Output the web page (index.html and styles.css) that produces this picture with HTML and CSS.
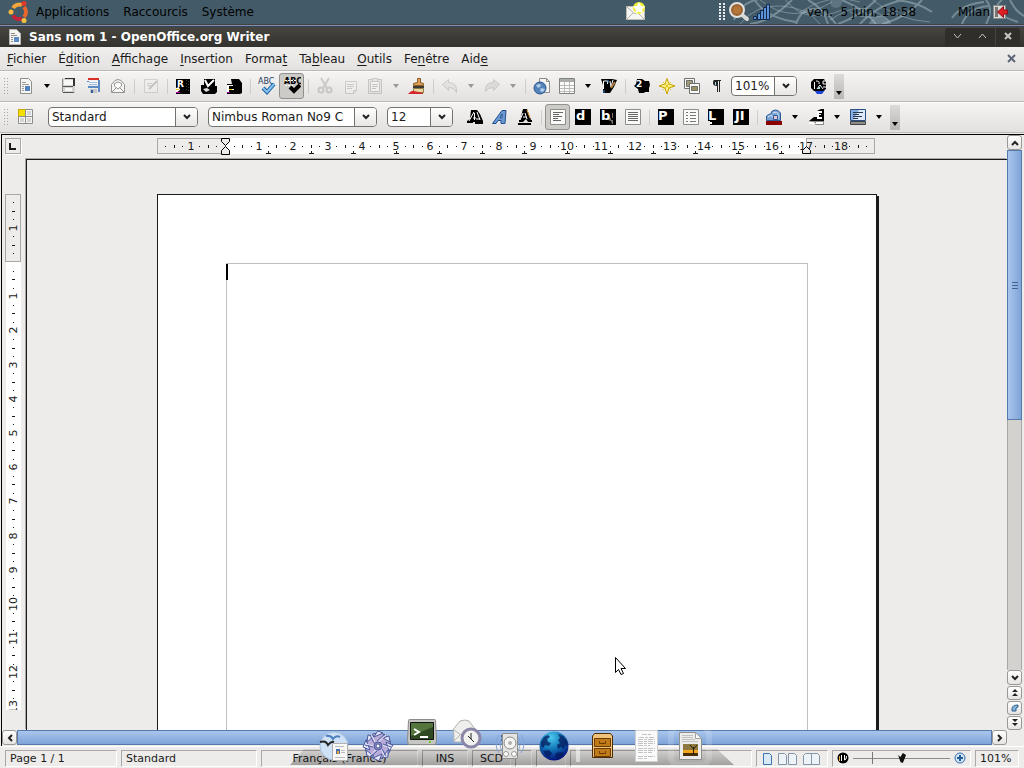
FILE: index.html
```html
<!DOCTYPE html>
<html lang="fr">
<head>
    <meta charset="UTF-8">
    <meta name="viewport" content="width=device-width, initial-scale=1.0">
    <title>Sans nom 1 - OpenOffice.org Writer</title>
    <link rel="stylesheet" href="styles.css">
</head>
<body>

<header class="panel">
    <svg class="panel-art" width="324" height="24" viewBox="0 0 324 24" fill="none" stroke="#9fb4be" stroke-opacity=".55">
        <path stroke-width="2" d="M34 20Q42 -2 70 -2M50 24Q70 22 92 0M52 -4Q64 18 96 22M96 24C102 6 120 2 136 24M108 0Q124 8 128 24"/>
        <path stroke-width="1" d="M40 24Q56 4 82 6T120 24M60 0Q92 26 132 2M84 -2Q104 26 142 10M100 12Q130 -8 160 2"/>
        <path stroke-width="2" d="M138 24Q160 16 176 0M142 0Q166 10 176 24M160 24Q178 4 204 0M182 24Q206 18 222 0M196 0Q218 2 232 12"/>
        <path stroke-width="1" d="M130 20Q164 -4 190 22M170 -2Q196 20 230 22M150 12Q170 24 200 10"/>
        <path stroke-width="2" d="M252 18Q262 4 284 2M262 24Q268 8 288 6M286 0Q294 10 286 24M302 0Q286 12 318 22M310 0Q316 12 324 16"/>
        <circle cx="180" cy="28" r="12" fill="#9fb4be" fill-opacity=".4" stroke="none"/>
        <circle cx="136" cy="2" r="6" fill="#9fb4be" fill-opacity=".3" stroke="none"/>
    </svg>
    <nav class="panel-menus">
        <svg width="24" height="24" viewBox="0 0 24 24" fill="none" stroke-width="4">
            <path stroke="#f2a53c" d="M6 8A7.500 7.500 0 0 1 15 5"/>
            <path stroke="#e8682c" d="M17 7A7.500 7.500 0 0 1 17 17"/>
            <path stroke="#c4243a" d="M15 18.500A7.500 7.500 0 0 1 6 15.500"/>
            <circle cx="4" cy="12" r="2.500" fill="#f7b73c"/>
            <circle cx="17" cy="3.500" r="2.500" fill="#e23b2c"/>
            <circle cx="17" cy="20.500" r="2.500" fill="#f7c23c"/>
        </svg>
        <button>Applications</button>
        <button>Raccourcis</button>
        <button>Système</button>
    </nav>
    <svg class="mail-tray" width="22" height="20" viewBox="0 0 22 20">
        <path fill="#f5f5f3" stroke="#bdbdb5" d="M1.500 4.500h18v13h-18z"/>
        <path fill="none" stroke="#b5b5ad" d="M2 5l8 7 8-7M2 17l6-6M19 17l-6-6"/>
        <circle cx="14" cy="6" r="6" fill="#f3ef3a"/>
        <path fill="#fff" d="M14 0l2 4 4 .500-3 3 1 4-4-2-4 2 1-4-3-3 4-.500z"/>
    </svg>
    <div class="tray">
        <svg width="6" height="18" viewBox="0 0 6 18" stroke="#e6ecef" stroke-width="2" stroke-dasharray="2 1"><path d="M1 0v18M5 0v18"/></svg>
        <svg width="22" height="22" viewBox="0 0 22 22">
            <path stroke="#d8d8d6" stroke-width="4" stroke-linecap="round" d="M13 13l6 5"/>
            <circle cx="9" cy="9" r="7" fill="#9a6434" stroke="#e2e2e0" stroke-width="2"/>
            <circle cx="9" cy="9" r="4" fill="#b5763a"/>
        </svg>
        <svg width="18" height="18" viewBox="0 0 18 18" fill="#5b93d8" stroke="#12274a">
            <path d="M.500 13.500h3v3h-3zM4.500 10.500h3v6h-3zM7.500 7.500h3v9h-3zM10.500 4.500h3v12h-3zM13.500 1.500h3v15h-3z"/>
        </svg>
    </div>
    <time class="clock">ven.&nbsp; 5 juin, 18:58</time>
    <button class="session">Milan
        <svg width="16" height="16" viewBox="0 0 16 16">
            <path fill="#d9d9d7" stroke="#8a8a88" d="M.500 1.500h12v13h-12z"/>
            <path fill="#767674" d="M2 3h3v10H2z"/>
            <path fill="#e01f26" stroke="#8f1115" d="M4.500 8l6-5.500V6h4v4h-4v3.500z"/>
        </svg>
    </button>
</header>

<div class="titlebar">
    <svg width="14" height="16" viewBox="0 0 14 16">
        <path fill="#f4f4f2" stroke="#b5b5b3" d="M1.500 .500h7l4 4v11h-11z"/>
        <path stroke="#8e8e8c" d="M3 4.500h4M3 6.500h6M3 8.500h2M3 10.500h2M3 12.500h2"/>
        <path fill="#5b8ac4" d="M6 8h5v5H6z"/>
    </svg>
    <h1>Sans nom 1 - OpenOffice.org Writer</h1>
    <div class="window-buttons">
        <button aria-label="Réduire"><svg width="9" height="6" viewBox="0 0 9 6"><path d="M1 1l3.500 4L8 1"/></svg></button>
        <button aria-label="Agrandir"><svg width="9" height="6" viewBox="0 0 9 6"><path d="M1 5l3.500-4L8 5"/></svg></button>
        <button aria-label="Fermer"><svg width="8" height="8" viewBox="0 0 8 8"><path stroke-width="2" d="M1 1l6 6M7 1L1 7"/></svg></button>
    </div>
</div>

<nav class="menubar">
    <button><u>F</u>ichier</button>
    <button>É<u>d</u>ition</button>
    <button><u>A</u>ffichage</button>
    <button><u>I</u>nsertion</button>
    <button>Forma<u>t</u></button>
    <button>Ta<u>b</u>leau</button>
    <button><u>O</u>utils</button>
    <button>Fe<u>n</u>être</button>
    <button>Aid<u>e</u></button>
    <button class="close-doc" aria-label="Fermer le document"><svg width="10" height="10" viewBox="0 0 10 10"><path stroke="#5c6678" stroke-width="2" d="M1 1l7 7M8 1L1 8"/></svg></button>
</nav>

<div class="toolbar">
    <span class="grip"></span>
    <button class="tool" aria-label="Nouveau"><svg width="18" height="18" viewBox="0 0 18 18">
        <path fill="#f6f6f4" stroke="#8c8f8a" d="M3.500 1.500h8l3 3v12h-11z"/>
        <path stroke="#9a9a98" d="M5 5.500h4M5 7.500h7M5 9.500h2M5 11.500h2M5 13.500h2"/>
        <path fill="#4f82bd" d="M8 9h5v5H8z"/></svg></button>
    <button class="drop" aria-label="Type de document"><svg width="6" height="4"><path d="M0 0h6L3 4z"/></svg></button>
    <button class="tool" aria-label="Ouvrir"><svg width="18" height="18" viewBox="0 0 18 18">
        <path fill="#d2d2d0" d="M3 1h13v15H3z"/>
        <path fill="#333" d="M6 1h10v1H6zM14 2h2v7h-2z"/><path fill="#555" d="M4 9h10v1H4zM4 15h11v1H4z"/>
        <path fill="#f7f7f5" d="M5 3h9v5H5zM6 11h7v3H6z"/><path stroke="#8a8a88" d="M3.500 2v13"/></svg></button>
    <button class="tool" aria-label="Enregistrer"><svg width="18" height="18" viewBox="0 0 18 18">
        <path fill="#d83024" d="M4 1h11v2H4z"/><path fill="#5b8ac4" d="M3 4h2v1H3zM14 3h2v12h-2zM4 9h10v2H4z"/>
        <path fill="#fafafa" d="M5 4h8v4H5z"/><path stroke="#9dbbe0" d="M5 5.500h8M5 7.500h8"/><path fill="#c4c6c8" d="M6 12h7v4H6z"/><path fill="#335f98" d="M7 13h2v3H7z"/></svg></button>
    <button class="tool" aria-label="Envoyer par courriel"><svg width="18" height="18" viewBox="0 0 18 18" fill="#f5f5f3" stroke="#939391">
        <path d="M2.500 7.500L6 3.500q3-2 6 0l3.500 4v8h-13z"/><path fill="#fff" d="M5.500 9V6.500q3.500-3 7 0V9L9 12z"/><path fill="none" d="M3 15l4-4M15 15l-4-4"/></svg></button>
    <span class="sep"></span>
    <button class="tool faded" aria-label="Éditer"><svg width="18" height="18" viewBox="0 0 18 18">
        <path fill="#f0f0ee" stroke="#9a9a98" d="M2.500 2.500h13v13h-13z"/><path stroke="#9a9a98" d="M5 6.500h5M5 8.500h4"/><path stroke="#777" stroke-width="2" d="M7 12l8-8"/></svg></button>
    <span class="sep"></span>
    <button class="tool" aria-label="Exporter en PDF"><svg width="18" height="18" viewBox="0 0 18 18">
        <path d="M1 2h14v15H1z"/><path stroke="#44423c" stroke-dasharray="1 2" d="M11.500 3v12M13.500 4v12"/><path fill="#fff" d="M1 11l3-1 1 3-4 3z"/><path fill="#f0d000" d="M1 12h3v1H1z"/><path fill="#c000b8" d="M1 15h4v1H1z"/><text class="glyph" x="2" y="10">R</text></svg></button>
    <button class="tool" aria-label="Imprimer"><svg width="18" height="18" viewBox="0 0 18 18">
        <path d="M4 2h11v7h2v6l-2 2H3l-2-3V8h3z"/><path fill="none" stroke="#fff" stroke-width="2" d="M5 3l3 6 6-6"/><path fill="#ddd" d="M3 12l4-1 3 2-4 2z"/></svg></button>
    <button class="tool" aria-label="Aperçu"><svg width="18" height="18" viewBox="0 0 18 18">
        <path d="M6 2h8l3 4v10l-2 1H2V7h5z"/><path fill="#fff" d="M2 8h6v1H4v3h5v1H4v3H2z"/><path fill="#e8d400" d="M4 12h3v1H4z"/><path fill="#9d00b0" d="M2 15h3v1H2z"/></svg></button>
    <span class="sep"></span>
    <button class="tool" aria-label="Orthographe"><svg width="18" height="18" viewBox="0 0 18 18">
        <text class="abc" x="0" y="7">ABC</text><path fill="none" stroke="#1b5e9f" stroke-width="4" d="M5 11l4 4 7-8"/><path fill="none" stroke="#83c3f2" stroke-width="2" d="M5 11l4 4 7-8"/></svg></button>
    <button class="tool pressed" aria-label="Vérification automatique"><svg width="18" height="18" viewBox="0 0 18 18">
        <text class="abc dark" x="1" y="7">ABC</text><path stroke="#fff" stroke-dasharray="2 1" d="M2 3.500h12M2 8.500h8"/><path fill="none" stroke="#000" stroke-width="4" d="M7 10l4 4 6-6"/></svg></button>
    <span class="sep"></span>
    <button class="tool faded" aria-label="Couper"><svg width="18" height="18" viewBox="0 0 18 18" fill="none" stroke="#8a8a88" stroke-width="2">
        <path d="M5 1l6 10M13 1L7 11"/><circle cx="5" cy="13" r="2.500"/><circle cx="13" cy="13" r="2.500"/></svg></button>
    <button class="tool faded" aria-label="Copier"><svg width="18" height="18" viewBox="0 0 18 18" fill="#f3f3f1" stroke="#8a8a88">
        <path d="M4.500 4.500h11v9l-3 3h-8zM12.500 16.500v-3h3"/><path d="M6 7.500h7M6 9.500h7M6 11.500h5"/></svg></button>
    <button class="tool faded" aria-label="Coller"><svg width="18" height="18" viewBox="0 0 18 18" fill="#dcdcda" stroke="#7d7d7b">
        <path d="M2.500 2.500h13v14h-13z"/><path fill="#fff" d="M4.500 4.500h9v10h-9z"/><path d="M6.500 1.500h5v3h-5z"/><path d="M6 7.500h6M6 9.500h6M6 11.500h4"/></svg></button>
    <button class="drop faded" aria-label="Options de collage"><svg width="6" height="4"><path d="M0 0h6L3 4z"/></svg></button>
    <button class="tool" aria-label="Appliquer le format"><svg width="18" height="18" viewBox="0 0 18 18">
        <path fill="#d9a05a" stroke="#8a5a20" d="M9.500 1.500h3v4l3 1v2h-10v-2l4-1z"/><path fill="#3d3a36" d="M5 9h11v2H5z"/><path fill="#e9d7a2" stroke="#8d7a42" d="M5.500 11.500h10v4h-10z"/><path fill="#d3262b" d="M0 17q4-4 6-3l9 2v1z"/></svg></button>
    <span class="sep"></span>
    <button class="tool faded" aria-label="Annuler"><svg width="18" height="18" viewBox="0 0 18 18" fill="#d2d2d0" stroke="#8a8a88"><path d="M1.500 7.500l6-5v3q9 0 8 10-2-5-8-5v3z"/></svg></button>
    <button class="drop faded" aria-label="Liste annuler"><svg width="6" height="4"><path d="M0 0h6L3 4z"/></svg></button>
    <button class="tool faded" aria-label="Restaurer"><svg width="18" height="18" viewBox="0 0 18 18" fill="#bdbdbb" stroke="#8a8a88"><path d="M16.500 7.500l-6-5v3q-9 0-8 9 2-4 8-4v3z"/></svg></button>
    <button class="drop faded" aria-label="Liste restaurer"><svg width="6" height="4"><path d="M0 0h6L3 4z"/></svg></button>
    <span class="sep"></span>
    <button class="tool" aria-label="Hyperlien"><svg width="18" height="18" viewBox="0 0 18 18">
        <path fill="#f4f4f2" stroke="#8a8d88" d="M6.500 1.500h7l3 3v11h-10z"/><path fill="none" stroke="#8a8d88" d="M13.500 1.500v3h3"/><circle cx="7" cy="11" r="6" fill="#5584bd" stroke="#2b5288"/><path fill="#b7cfe9" d="M3 8l4-1 1 2-3 2zM8 11l4 1-2 3-3-1z"/></svg></button>
    <button class="tool" aria-label="Tableau"><svg width="18" height="18" viewBox="0 0 18 18">
        <path fill="#fbfbf9" stroke="#7f827d" d="M1.500 1.500h15v15h-15z"/><path fill="#a9aca7" d="M2 2h14v3H2z"/><path fill="none" stroke="#b9bbb6" d="M2 8.500h14M2 11.500h14M2 14.500h14M6.500 5v11M11.500 5v11"/></svg></button>
    <button class="drop" aria-label="Taille du tableau"><svg width="6" height="4"><path d="M0 0h6L3 4z"/></svg></button>
    <button class="tool" aria-label="Fonctions de dessin"><svg width="18" height="18" viewBox="0 0 18 18">
        <path d="M1 2h11l5 1-3 7-4 6H3V8z"/><path fill="none" stroke="#fff" d="M3.500 12V4h4v3M10 4l1 6M13 3l-2 7"/><path stroke="#3a8ad8" d="M4 13v3M8 3v3"/><path stroke="#a87838" stroke-width="2" d="M11 11l4-6"/></svg></button>
    <span class="sep"></span>
    <button class="tool" aria-label="Rechercher"><svg width="18" height="18" viewBox="0 0 18 18">
        <path d="M4 2h5l3 2h4l1 4-1 3v4h-4l-1 1H6l-1-4-4-3 2-2z"/><text class="glyph" x="3" y="10">2</text></svg></button>
    <button class="tool" aria-label="Navigateur"><svg width="18" height="18" viewBox="0 0 18 18" fill="#fbf08a" stroke="#c9a400"><path d="M9 1.500l2 5.500 6 2-6 2-2 6-2-6-6-2 6-2z"/><path fill="none" stroke="#e2c318" d="M5 5l8 8M13 5l-8 8"/></svg></button>
    <button class="tool" aria-label="Galerie"><svg width="18" height="18" viewBox="0 0 18 18" fill="#f8f8f6" stroke="#6d706b">
        <path d="M1.500 1.500h10v10h-10z"/><path fill="#a39a7a" d="M3.500 3.500h6v6h-6z"/><path d="M6.500 6.500h10v10h-10z"/><path fill="#9c8f60" d="M8.500 9.500h6v4h-6z"/></svg></button>
    <button class="tool" aria-label="Caractères non imprimables"><svg width="18" height="18" viewBox="0 0 18 18"><path fill="#222" d="M6 3h7v1h-1v11h-1V4h-1v11H9V9q-4 0-4-3t1-3z"/><path fill="#9ed6e8" d="M7 5h1v3H7z"/></svg></button>
    <label class="combo zoom-combo"><select aria-label="Zoom"><option>101%</option></select><span class="combo-arrow"><svg width="8" height="6" viewBox="0 0 8 6"><path d="M1 1l3 3 3-3"/></svg></span></label>
    <button class="tool" aria-label="Aide"><svg width="18" height="18" viewBox="0 0 18 18">
        <path fill="#1c42d8" d="M4 13h11l-3 4H7z"/><path d="M4 2h10l2 3v7l-3 2H4l-3-3V5z"/><path fill="none" stroke="#fff" d="M4.500 12V5M6 4q4 0 3 3M7 12l3-4 3 4M16 4h-3v3h3M13 10h4"/><path fill="#9ed6e8" d="M8 10h2v2H8z"/></svg></button>
    <button class="overflow" aria-label="Plus"><svg width="6" height="4"><path d="M0 0h6L3 4z"/></svg></button>
</div>

<div class="toolbar">
    <span class="grip"></span>
    <button class="tool" aria-label="Styles et formatage"><svg width="18" height="18" viewBox="0 0 18 18" stroke="#8b8e89">
        <path fill="#f7f7f5" d="M1.500 1.500h14v14h-14z"/><path fill="#f4e000" stroke="#c9a900" d="M1.500 1.500h7v7h-7z"/><path fill="#d5d5d3" stroke="none" d="M10 3h4v4h-4zM3 10h4v4H3zM10 10h4v4h-4z"/><path d="M8.500 2v13M2 8.500h13"/></svg></button>
    <label class="combo style-combo"><select aria-label="Style"><option>Standard</option></select><span class="combo-arrow"><svg width="8" height="6" viewBox="0 0 8 6"><path d="M1 1l3 3 3-3"/></svg></span></label>
    <label class="combo font-combo"><select aria-label="Police"><option>Nimbus Roman No9 C</option></select><span class="combo-arrow"><svg width="8" height="6" viewBox="0 0 8 6"><path d="M1 1l3 3 3-3"/></svg></span></label>
    <label class="combo size-combo"><select aria-label="Taille"><option>12</option></select><span class="combo-arrow"><svg width="8" height="6" viewBox="0 0 8 6"><path d="M1 1l3 3 3-3"/></svg></span></label>
    <button class="tool" aria-label="Gras"><svg width="18" height="18" viewBox="0 0 18 18"><path d="M5 2h6l3 4 3 7v3H9v-2H7v1H1v-2l3-2z"/><path fill="none" stroke="#fff" d="M3 13l5-9M8.500 5v7M7 10h3M11 4l3 8M10 11h4"/></svg></button>
    <button class="tool" aria-label="Italique"><svg width="18" height="18" viewBox="0 0 18 18"><path fill="#6d9bd1" stroke="#20508f" fill-rule="evenodd" d="M1.500 15.500L11 2.500h4l-1 13h-4v-3H7l-2 3zM9 10h2V6z"/></svg></button>
    <button class="tool" aria-label="Souligné"><svg width="18" height="18" viewBox="0 0 18 18"><path d="M7 1h4l4 11h1v2h-4l-2-3-3 3H3v-2h1zM2 15h13v2H2z"/><path fill="none" stroke="#fff" d="M4 12l3-7M9 5l2 6M7 9h3"/><path stroke="#e8a53a" d="M11 2l3 8"/></svg></button>
    <span class="sep"></span>
    <button class="tool pressed" aria-label="Aligner à gauche"><svg width="18" height="18" viewBox="0 0 18 18"><path fill="#fafaf8" stroke="#8b8e89" d="M1.500 1.500h15v15h-15z"/><path stroke="#666" d="M4 4.500h10M4 6.500h6M4 8.500h9M4 10.500h5M4 12.500h8"/></svg></button>
    <button class="tool" aria-label="Centrer"><svg width="18" height="18" viewBox="0 0 18 18"><path d="M1 1h16v16H1z"/><text class="glyph big" x="2" y="12">d</text></svg></button>
    <button class="tool" aria-label="Aligner à droite"><svg width="18" height="18" viewBox="0 0 18 18"><path d="M1 1h16v16H1z"/><path fill="#77736c" d="M9 10h3v2h2v4h-1l-1-3-3-1zM13 5h1v5h-1z"/><text class="glyph big" x="2" y="12">b</text></svg></button>
    <button class="tool" aria-label="Justifier"><svg width="18" height="18" viewBox="0 0 18 18"><path fill="#fafaf8" stroke="#8b8e89" d="M1.500 1.500h15v15h-15z"/><path stroke="#666" d="M4 4.500h10M4 6.500h10M4 8.500h10M4 10.500h10M4 12.500h10"/></svg></button>
    <span class="sep"></span>
    <button class="tool" aria-label="Numérotation"><svg width="18" height="18" viewBox="0 0 18 18"><path d="M1 1h16v16H1z"/><text class="glyph big" x="1" y="12">P</text></svg></button>
    <button class="tool" aria-label="Puces"><svg width="18" height="18" viewBox="0 0 18 18"><path fill="#fafaf8" stroke="#8b8e89" d="M1.500 1.500h15v15h-15z"/><path stroke="#777" d="M4 4.500h2M8 4.500h6M4 7.500h2M8 7.500h6M4 10.500h2M8 10.500h6M4 13.500h2M8 13.500h6"/></svg></button>
    <button class="tool" aria-label="Diminuer le retrait"><svg width="18" height="18" viewBox="0 0 18 18"><path d="M1 1h16v16H3v-4H1z"/><path fill="#fff" d="M3 14h2v2H3z"/><text class="glyph big" x="1" y="12">L</text></svg></button>
    <button class="tool" aria-label="Augmenter le retrait"><svg width="18" height="18" viewBox="0 0 18 18"><path d="M1 1h16v16H1z"/><text class="glyph big" x="3" y="12">JI</text></svg></button>
    <span class="sep"></span>
    <button class="tool" aria-label="Couleur de caractère"><svg width="18" height="18" viewBox="0 0 18 18"><path fill="#7aa2d4" stroke="#2f5c98" d="M1.500 12.500V8q2-2 4-2 1-4 5-4 3 0 5 3v7.500z"/><path fill="none" stroke="#dbe8f6" d="M3 9q3-3 5 0M8 5q4-2 5 1v5"/><path fill="#e8c4cc" stroke="#2f5c98" d="M8.500 7.500h4v4h-4z"/><path fill="#8c0000" d="M1 13h16v4H1z"/></svg></button>
    <button class="drop" aria-label="Choisir la couleur"><svg width="6" height="4"><path d="M0 0h6L3 4z"/></svg></button>
    <button class="tool" aria-label="Surlignage"><svg width="18" height="18" viewBox="0 0 18 18"><path d="M14 1h3v12H2l5-4h3V3z"/><path fill="#fff" d="M10 3h5v2h-3v1h2v1h-2v2h3v2h-5z"/><path fill="#8a8a88" d="M1 13h16v4H8l1-2z"/><path fill="#fff" d="M2 14h5v2H2zM9 14h7v2H9z"/></svg></button>
    <button class="drop" aria-label="Choisir le surlignage"><svg width="6" height="4"><path d="M0 0h6L3 4z"/></svg></button>
    <button class="tool" aria-label="Arrière-plan"><svg width="18" height="18" viewBox="0 0 18 18"><path fill="#86aee0" stroke="#2c4f83" d="M1.500 1.500h15v11h-15z"/><path fill="#dde9f6" d="M10 2h6v10H4z"/><path stroke="#26364e" d="M4 4.500h10M4 6.500h6M4 8.500h9M4 10.500h5"/><path fill="#8b8e89" stroke="#444" d="M1.500 13.500h15v3h-15z"/></svg></button>
    <button class="drop" aria-label="Choisir l'arrière-plan"><svg width="6" height="4"><path d="M0 0h6L3 4z"/></svg></button>
    <button class="overflow" aria-label="Plus"><svg width="6" height="4"><path d="M0 0h6L3 4z"/></svg></button>
</div>

<main class="workspace">
    <div class="corner"><button aria-label="Tabulation"><svg width="8" height="8"><path d="M1 1v6h6" fill="none" stroke="#1a1a1a" stroke-width="2"/></svg></button></div>
    <div class="ruler-row"><svg class="ruler-h" width="719" height="17"></svg></div>
    <div class="ruler-col"><svg class="ruler-v" width="16" height="100%"></svg></div>
    <div class="canvas">
        <div class="page">
            <div class="text-frame" contenteditable="true" role="textbox" aria-label="Document"><span class="caret"></span></div>
        </div>
    </div>
    <div class="scroll-v">
        <button aria-label="Haut"><svg width="8" height="6" viewBox="0 0 8 6"><path d="M1 5l3-3 3 3"/></svg></button>
        <div class="track"><span class="thumb"><i></i></span></div>
        <button aria-label="Bas"><svg width="8" height="6" viewBox="0 0 8 6"><path d="M1 1l3 3 3-3"/></svg></button>
        <button class="small" aria-label="Page précédente"><svg width="8" height="8" viewBox="0 0 8 8"><path class="solid" d="M4 0l3 3H1zM4 4l3 3H1z"/></svg></button>
        <button class="small" aria-label="Navigation"><svg width="8" height="8" viewBox="0 0 8 8"><path class="nav-mark" d="M1 7V5q0-4 6-4v2L5 4v3z"/></svg></button>
        <button class="small" aria-label="Page suivante"><svg width="8" height="8" viewBox="0 0 8 8"><path class="solid" d="M1 0h6L4 3zM1 4h6L4 7z"/></svg></button>
    </div>
    <div class="scroll-h">
        <button aria-label="Gauche"><svg width="6" height="8" viewBox="0 0 6 8"><path d="M5 1L2 4l3 3"/></svg></button>
        <span class="thumb"><i></i></span>
        <button aria-label="Droite"><svg width="6" height="8" viewBox="0 0 6 8"><path d="M1 1l3 3-3 3"/></svg></button>
    </div>
</main>

<footer class="statusbar">
    <span class="field f-page">Page 1 / 1</span>
    <span class="field f-style">Standard</span>
    <span class="field f-lang">Français (France)</span>
    <span class="field f-ins">INS</span>
    <span class="field f-scd">SCD</span>
    <span class="field f-mod"></span>
    <span class="field f-sig"></span>
    <span class="field f-info"></span>
    <span class="field f-views">
        <svg width="10" height="12" viewBox="0 0 10 12"><path fill="#dbe9f7" stroke="#3b76b4" d="M.500 .500h6l2 2v9h-8z"/></svg>
        <svg width="20" height="12" viewBox="0 0 20 12" fill="#eef3f8" stroke="#8496a8"><path d="M.500 .500h6l2 2v9h-8zM10.500 .500h6l2 2v9h-8z"/></svg>
        <svg width="18" height="12" viewBox="0 0 18 12" fill="#eef3f8" stroke="#8496a8"><path d="M.500 2.500l2-2h6v11h-8zM8.500 .500h6l2 2v9h-8z"/></svg>
    </span>
    <span class="field f-slider">
        <svg width="12" height="12" viewBox="0 0 12 12"><circle cx="6" cy="6" r="5.500"/><path fill="none" stroke="#fff" d="M4.500 3v6M7.500 3v5q2 0 2-4"/><path stroke="#e8a53a" d="M2.500 4v5"/></svg>
        <input type="range" min="20" max="180" value="101" aria-label="Facteur de zoom">
        <svg width="12" height="12" viewBox="0 0 12 12"><circle cx="6" cy="6" r="5" fill="#d5e7f7" stroke="#2f6ca8"/><path stroke="#1f5a98" stroke-width="2" d="M3 6h6M6 3v6"/></svg>
    </span>
    <span class="field f-zoom">101%</span>
</footer>

<nav class="dock" aria-label="Dock">
    <div class="shelf"></div>
    <button aria-label="Writer"><svg width="32" height="32" viewBox="0 0 32 32">
        <circle cx="16" cy="16" r="14" fill="#cfe1f4" stroke="#a5c1e2"/><path fill="none" stroke="#4a7fc0" stroke-width="2" d="M8 6q5-1 7 3 3-4 7-2"/><path fill="none" stroke="#222" stroke-width="2" d="M2 12q6-2 8 3 3-4 6-3"/>
        <path fill="#f8f8f6" stroke="#b0b0ae" d="M14.500 13.500h15v17h-15z"/><path fill="#4a6ea8" d="M18 19h4v5h-4z"/><path fill="#e0a040" d="M19 21h2v3h-2z"/><path stroke="#bbb" d="M17 16.500h9M23 20.500h4M23 22.500h4M17 27.500h10"/></svg></button>
    <button aria-label="Photos"><svg width="32" height="32" viewBox="0 0 32 32" stroke="#4a5a9a" stroke-width="1">
        <circle cx="16" cy="16" r="13" fill="#b9acd8"/><path fill="#e6e6fa" d="M16 1l5 2-9 4 3-5zM31 15l-4 6-3-9 6 3zM17 31l-6-3 9-4zM1 17l3-7 4 10zM6 5l6 1-7 6zM27 6l1 6-7-4zM26 27l-6 1 6-8zM5 26l-1-6 8 6z"/>
        <path fill="none" stroke="#e9e9fb" stroke-width="1" d="M16 12l8-7M20 15l9 3M19 19l4 8M14 20l-7 6M12 16l-9-2M13 12L9 4"/><path fill="none" d="M15 11l8-7M21 14l8 3M20 19l4 7M15 21l-7 6M11 17l-8-2M12 13L8 5"/><circle cx="16" cy="16" r="4" fill="#8f86c4"/><circle cx="16" cy="16" r="2" fill="#fff"/></svg></button>
    <button class="raised" aria-label="Terminal"><svg width="32" height="32" viewBox="0 0 32 32">
        <path fill="#c5c5c1" stroke="#8b8b87" d="M2.500 3.500q0-1 1-1h25q1 0 1 1l1 20q0 4-2 4h-25q-2 0-2-4z"/><path fill="#2f4a22" stroke="#111" d="M4.500 5.500h23v17h-23z"/><path fill="#55753f" d="M5 6h22v4L5 19z"/><path fill="none" stroke="#fff" stroke-width="2" d="M8 12l5 3-5 3M14 20h8"/><path fill="#6fd030" d="M23 24h2v2h-2z"/></svg></button>
    <button class="raised" aria-label="Courriel et agenda"><svg width="32" height="32" viewBox="0 0 32 32">
        <path fill="#efefed" stroke="#b0b0ae" d="M3.500 12L10 4q5-2 9 0l6 8v13h-21z"/><path fill="none" stroke="#b5b5b3" d="M4 13l10 7 10-7M4 24l7-7"/><circle cx="21" cy="21" r="9" fill="#f1f1ef" stroke="#8c86a8" stroke-width="3"/><path fill="none" stroke="#222" d="M21 16v6l3 3M18 19l3 3"/></svg></button>
    <button aria-label="Musique"><svg width="32" height="32" viewBox="0 0 32 32">
        <path fill="none" stroke="#7fa4d8" stroke-width="1" d="M5 5Q-1 14 5 23M27 5q6 9 0 18M8 7q-4 7 0 14M24 7q4 7 0 14"/><path fill="#e4e4e2" stroke="#8f8f8d" d="M8.500 3.500h15v25h-15z"/><circle cx="16" cy="13" r="6" fill="#f5f5f3" stroke="#8b8b89"/><circle cx="16" cy="13" r="2" fill="#b0b0ae"/><circle cx="12" cy="24" r="2.500" fill="#fff" stroke="#999"/><circle cx="20" cy="24" r="2.500" fill="#fff" stroke="#999"/></svg></button>
    <button aria-label="Navigateur web"><svg width="32" height="32" viewBox="0 0 32 32">
        <defs><radialGradient id="globe" cx=".4" cy=".2" r=".8"><stop offset="0" stop-color="#4cc9ee"/><stop offset=".5" stop-color="#1278b8"/><stop offset="1" stop-color="#04107a"/></radialGradient></defs>
        <circle cx="16" cy="16" r="14.500" fill="url(#globe)"/><path fill="#051a5c" fill-opacity=".75" d="M3 12l3-5 4-2 2 2-3 2 1 3 3 1-2 3-4-1-2 3-2-2zM20 4l5 2 4 5 1 5-3-1-1 4-3-2-3 2-1-4 3-2-2-3 2-2zM5 21l6-1 3 3-2 4-4-1zM18 23l6-1 2 2-5 5-4-2z"/></svg></button>
    <span class="dock-gap"></span>
    <button aria-label="Fichiers"><svg width="32" height="32" viewBox="0 0 32 32">
        <path fill="#f0c27a" stroke="#4c2d06" d="M6.500 6l2-2.500h16l2 2.500v21.500h-20z"/><path fill="#c07a18" stroke="#6a3c04" d="M8.500 8.500h16v8h-16zM8.500 18.500h16v8h-16z"/><path fill="none" stroke="#6a3c04" d="M13.500 11v2.500h6V11M13.500 21v2.500h6V21"/></svg></button>
    <button aria-label="Document texte"><svg width="32" height="32" viewBox="0 0 32 32">
        <path fill="#fafafa" stroke="#cfcfcf" d="M5.500 .500h22v31h-22z"/><path stroke="#c3c3c3" stroke-dasharray="5 1 3 1" d="M12 4.500h9M9 7.500h15M8 9.500h17M8 11.500h17M8 13.500h17M8 15.500h12M8 18.500h17M8 20.500h17M8 22.500h14M8 26.500h17M8 28.500h10"/></svg></button>
    <button class="active" aria-label="Image"><svg width="32" height="32" viewBox="0 0 32 32">
        <path fill="#ececea" stroke="#8f8f8d" d="M5.500 2.500h16l6 6v21h-22z"/><path fill="#fff" stroke="#a0a09e" d="M21.500 2.500v6h6z"/><path stroke="#c0c0be" d="M8 5.500h11M8 7.500h11M8 9.500h13M8 11.500h16"/><path fill="#8d7a40" d="M9 14h15v12H9z"/><path fill="#f3a51c" d="M9 20h15v3H9z"/><path fill="#4a3008" d="M9 23h15v3H9z"/><path fill="none" stroke="#2b1c08" d="M19.500 25v-8M16 15l3.500 4 3.500-4"/></svg></button>
</nav>

<svg class="pointer" width="14" height="20" viewBox="0 0 14 20"><path fill="#fff" stroke="#000" d="M1.500 1.500v15l3-3 2.500 5 2.500-1-2.500-5h4.500z"/></svg>

<script src="script.js"></script>
</body>
</html>
```
FILE: styles.css
```css
* {
    box-sizing: border-box;
}

body {
    margin: 0;
    height: 100vh;
    display: flex;
    flex-direction: column;
    overflow: hidden;
    position: relative;
    background: #edecea;
    color: #1a1a1a;
    font-family: "DejaVu Sans", sans-serif;
    font-size: 12px;
}

button {
    font: inherit;
    color: inherit;
    border: 0;
    padding: 0;
    background: none;
}

svg {
    display: block;
    flex-shrink: 0;
}

/* desktop panel */
.panel {
    height: 26px;
    flex-shrink: 0;
    display: flex;
    align-items: center;
    position: relative;
    background: #435b68;
    border-bottom: 1px solid #7f8fae;
    box-shadow: inset 0 -1px 0 #45413f;
    color: #000;
    padding: 0 15px 2px 7px;
}

.panel-art {
    position: absolute;
    right: 0;
    top: 0;
}

.panel-menus {
    display: flex;
    align-items: center;
    flex: 1;
}

.panel-menus button {
    padding: 0 7px;
}

.panel-menus svg {
    margin-right: -2px;
}

.mail-tray {
    margin-right: 72px;
}

.tray {
    display: flex;
    align-items: center;
    gap: 3px;
    position: relative;
}

.clock {
    position: relative;
    margin: 0 42px 0 36px;
}

.session {
    display: flex;
    align-items: center;
    gap: 3px;
    position: relative;
}

/* window */
.titlebar {
    height: 21px;
    flex-shrink: 0;
    display: flex;
    align-items: center;
    gap: 7px;
    padding: 0 4px 0 8px;
    background: linear-gradient(#464540, #33322e);
    border-top: 1px solid #35435f;
}

.titlebar h1 {
    margin: 0;
    flex: 1;
    font-size: 12px;
    color: #fff;
}

.window-buttons {
    display: flex;
    background: #2f2e2b;
    border-radius: 3px;
}

.window-buttons button {
    width: 25px;
    height: 18px;
    display: grid;
    place-items: center;
    padding-bottom: 2px;
}

.window-buttons button:last-child {
    border-left: 1px solid #45443f;
}

.window-buttons path {
    fill: none;
    stroke: #c9c7c2;
}

.menubar {
    height: 24px;
    flex-shrink: 0;
    display: flex;
    align-items: center;
    padding: 0 3px 0 1px;
    background: linear-gradient(#f0efee, #e4e2e1);
    border-bottom: 1px solid #bcbab8;
}

.menubar button {
    padding: 0 6px;
}

.menubar u {
    text-underline-offset: 2px;
}

.menubar .close-doc {
    margin-left: auto;
    padding-right: 4px;
}

.toolbar {
    height: 31px;
    flex-shrink: 0;
    display: flex;
    align-items: center;
    padding-bottom: 1px;
    background: linear-gradient(#f5f4f3, #e3e1e0);
    border-bottom: 1px solid #bcbab8;
    border-top: 1px solid #fafafa;
}

.grip {
    width: 5px;
    height: 18px;
    margin: 0 5px 0 3px;
    background: radial-gradient(circle, #a8a6a4 1px, transparent 1px);
    background-size: 3px 3px;
}

.tool {
    width: 25px;
    height: 26px;
    display: grid;
    place-items: center;
    flex-shrink: 0;
}

.tool.pressed {
    background: #cdcbc8;
    border: 1px solid #93918e;
    border-radius: 3px;
}

.faded {
    opacity: 0.35;
}

.drop {
    width: 17px;
    height: 26px;
    display: grid;
    place-items: center;
    flex-shrink: 0;
}

.sep {
    width: 8px;
    height: 15px;
    flex-shrink: 0;
    background: linear-gradient(#cfcdcb, #cfcdcb) center / 1px 100% no-repeat;
}

.overflow {
    width: 10px;
    height: 25px;
    margin-left: 3px;
    display: grid;
    place-items: end center;
    padding-bottom: 4px;
    background: linear-gradient(#dddbd9, #b9b7b5);
}

.glyph {
    font-size: 9px;
    font-weight: bold;
    fill: #fff;
}

.glyph.big {
    font-size: 13px;
}

.abc {
    font-size: 8px;
    fill: #1c4060;
}

.abc.dark {
    font-weight: bold;
    fill: #000;
}

.combo {
    display: grid;
    grid-template-columns: 1fr 22px;
    height: 20px;
    background: #fff;
    border: 1px solid #74726f;
    border-radius: 4px;
    overflow: hidden;
}

.combo select {
    grid-area: 1 / 1 / 2 / 3;
    appearance: none;
    min-width: 0;
    border: 0;
    background: none;
    padding: 0 3px;
    font: inherit;
    color: inherit;
}

.combo-arrow {
    grid-area: 1 / 2 / 2 / 3;
    display: grid;
    place-items: center;
    background: linear-gradient(#fff, #e8e6e4);
    border-left: 1px solid #74726f;
    pointer-events: none;
}

.combo-arrow path,
.scroll-v path,
.scroll-h path {
    fill: none;
    stroke: #222;
    stroke-width: 2;
}

.style-combo {
    width: 150px;
    margin-left: 10px;
}

.font-combo {
    width: 169px;
    margin-left: 10px;
}

.size-combo {
    width: 66px;
    margin: 0 9px 0 10px;
}

.zoom-combo {
    width: 66px;
    margin: 0 9px 0 2px;
}

/* document area */
.workspace {
    flex: 1;
    min-height: 0;
    display: grid;
    grid-template-columns: 24px 1fr 17px;
    grid-template-rows: 24px 1fr 16px;
    margin: 1px 0 0 1px;
    border-left: 1px solid #000;
    border-top: 1px solid #000;
}

.corner {
    padding: 3px;
}

.corner button {
    width: 16px;
    height: 16px;
    display: grid;
    place-items: center;
    border: 1px solid #aaa8a6;
    box-shadow: 1px 1px 0 #fff;
}

.ruler-row {
    display: flex;
    justify-content: center;
    padding-top: 3px;
    min-width: 0;
}

.ruler-col {
    padding: 35px 3px 20px;
    min-height: 0;
}

.ruler-label {
    font-size: 11px;
    text-anchor: middle;
    fill: #1a1a1a;
}

.canvas {
    display: flex;
    justify-content: center;
    padding-top: 34px;
    overflow: hidden;
    min-height: 0;
    border-left: 1px solid #1a1a1a;
    border-top: 1px solid #1a1a1a;
    box-shadow: -1px -1px 0 #aaa8a6;
}

.page {
    width: 720px;
    min-height: 1018px;
    flex-shrink: 0;
    display: flex;
    padding: 68px;
    background: #fff;
    border: 1px solid #1a1a1a;
    box-shadow: 2px 2px 0 #1a1a1a;
}

.text-frame {
    flex: 1;
    border: 1px solid #c0c0c0;
    outline: none;
}

.caret {
    display: block;
    width: 2px;
    height: 16px;
    margin-left: -1px;
    background: #000;
}

.scroll-v {
    grid-area: 1 / 3 / 4 / 4;
    display: flex;
    flex-direction: column;
    gap: 1px;
    padding-bottom: 16px;
    padding-right: 2px;
}

.scroll-v button,
.scroll-h button {
    width: 15px;
    height: 15px;
    flex-shrink: 0;
    display: grid;
    place-items: center;
    border: 1px solid #9a9896;
    border-radius: 3px;
    background: linear-gradient(#fff, #e6e4e2);
}

.scroll-v .small {
    height: 14px;
}

.scroll-v .solid {
    fill: #222;
    stroke: none;
}

.scroll-v .nav-mark {
    fill: #86b4d8;
    stroke: #2c5f8f;
    stroke-width: 1;
}

.track {
    flex: 1;
    margin: -1px 0;
    background: #d3d2cf;
    border: solid #aaa8a6;
    border-width: 0 1px;
}

.thumb {
    display: grid;
    place-items: center;
    border: 1px solid #5679ab;
}

.track .thumb {
    height: 52%;
    margin: 0 -1px;
    background: linear-gradient(to right, #a9c5ec, #7fa4d8);
}

.thumb i {
    width: 6px;
    height: 7px;
    background: repeating-linear-gradient(#44638f 0 1px, transparent 1px 3px);
}

.scroll-h {
    grid-column: 1 / 3;
    display: flex;
}

.scroll-h .thumb {
    flex: 1;
    height: 15px;
    background: linear-gradient(#a9c5ec, #7fa4d8);
}

.scroll-h .thumb i {
    width: 7px;
    height: 6px;
    background: repeating-linear-gradient(to right, #44638f 0 1px, transparent 1px 3px);
}

/* status bar */
.statusbar {
    height: 22px;
    flex-shrink: 0;
    display: flex;
    gap: 4px;
    padding: 3px 5px 1px;
    border-top: 1px solid #fff;
    font-size: 11px;
}

.field {
    display: flex;
    align-items: center;
    padding: 0 4px 1px;
    border: 1px solid;
    border-color: #aaa8a6 #fff #fff #aaa8a6;
    white-space: nowrap;
}

.f-page {
    width: 112px;
}

.f-style {
    width: 136px;
}

.f-lang {
    width: 157px;
    justify-content: center;
}

.f-ins {
    width: 46px;
    justify-content: center;
}

.f-scd {
    width: 39px;
    justify-content: center;
}

.f-mod {
    width: 17px;
}

.f-sig {
    width: 30px;
}

.f-info {
    flex: 1;
}

.f-views {
    width: 72px;
    padding: 0 6px;
    justify-content: space-between;
}

.f-slider {
    width: 139px;
    gap: 4px;
}

.f-slider input {
    appearance: none;
    flex: 1;
    min-width: 0;
    height: 12px;
    margin: 0;
    background:
        linear-gradient(#777, #777) 20% center / 1px 12px no-repeat,
        linear-gradient(#8a8a8a, #8a8a8a) center / 100% 1px no-repeat;
}

.f-slider input::-webkit-slider-thumb {
    appearance: none;
    width: 8px;
    height: 10px;
    background: #111;
    clip-path: polygon(0 20%, 30% 40%, 60% 0, 100% 20%, 60% 100%, 30% 90%);
}

.f-zoom {
    width: 44px;
}

/* dock lies over the bottom of the window */
.dock {
    position: absolute;
    left: 50%;
    bottom: 0;
    transform: translateX(-50%);
    display: flex;
    align-items: flex-end;
    gap: 12px;
    padding: 0 28px 6px;
}

.dock button {
    position: relative;
    border-radius: 5px;
}

.dock .raised {
    margin-bottom: 13px;
}

.dock .active {
    box-shadow: 0 0 0 6px rgba(255, 255, 255, 0.15);
}

.dock-gap {
    width: 4px;
    height: 16px;
    margin: 0 -6px;
    position: relative;
    background: rgba(255, 255, 255, 0.5);
}

.shelf {
    position: absolute;
    left: 0;
    right: 0;
    bottom: 3px;
    height: 16px;
    background: linear-gradient(rgba(0, 0, 0, 0.1), rgba(0, 0, 0, 0.32));
    clip-path: polygon(0 100%, 14px 0, 427px 0, 100% 100%);
}

.pointer {
    position: absolute;
    left: 614px;
    top: 656px;
}
```
FILE: script.js
```javascript
const NS = 'http://www.w3.org/2000/svg';
const CM = 34.2;
const MARGIN = 68;

function add(svg, name, attrs, text) {
    const node = document.createElementNS(NS, name);
    for (const key in attrs) {
        node.setAttribute(key, attrs[key]);
    }
    if (text !== undefined) node.textContent = text;
    svg.appendChild(node);
}

function drawHorizontal(svg) {
    add(svg, 'rect', { x: MARGIN, y: 0, width: 581, height: 16, fill: '#fff' });
    add(svg, 'rect', { x: 0.5, y: 0.5, width: MARGIN, height: 15, fill: 'none', stroke: '#aaa8a6' });
    add(svg, 'rect', { x: 649.5, y: 0.5, width: 68, height: 15, fill: '#edecea', stroke: '#aaa8a6' });

    for (let i = -7; i < 76; i++) {
        const x = Math.round(MARGIN + i * CM / 4);
        if (i % 4 === 0) {
            if (i !== 0) add(svg, 'text', { x: x, y: 12, class: 'ruler-label' }, Math.abs(i / 4));
        } else if (i % 2 === 0) {
            add(svg, 'rect', { x: x, y: 7, width: 1, height: 3, fill: '#1a1a1a' });
        } else {
            add(svg, 'rect', { x: x, y: 8, width: 1, height: 1, fill: '#1a1a1a' });
        }
    }

    // default tab stops, every 1.25 cm
    for (let t = 1; t < 14; t++) {
        const x = Math.round(MARGIN + t * CM * 1.25) + 0.5;
        add(svg, 'path', { d: `M${x} 13v3M${x - 2.5} 15.500h5`, stroke: '#1a1a1a', fill: 'none' });
    }

    add(svg, 'path', { d: 'M64.500 .500h8v3l-4 4-4-4zM64.500 16.500h8v-4l-4-4-4 4z', fill: '#edecea', stroke: '#000' });
    add(svg, 'path', { d: 'M645.500 15.500h8v-3l-4-4-4 4z', fill: '#edecea', stroke: '#000' });
}

function drawVertical(svg) {
    // only as many centimetres as the window has room for
    const last = (svg.clientHeight - MARGIN) / (CM / 4);
    add(svg, 'rect', { x: 1, y: MARGIN, width: 15, height: '100%', fill: '#fff' });
    add(svg, 'rect', { x: 0.5, y: 0.5, width: 15, height: 67, fill: 'none', stroke: '#aaa8a6' });

    for (let i = -7; i < last; i++) {
        const y = Math.round(MARGIN + i * CM / 4);
        if (i % 4 === 0) {
            if (i !== 0) add(svg, 'text', { x: 0, y: 0, transform: `translate(12 ${y}) rotate(-90)`, class: 'ruler-label' }, Math.abs(i / 4));
        } else if (i % 2 === 0) {
            add(svg, 'rect', { x: 7, y: y, width: 3, height: 1, fill: '#1a1a1a' });
        } else {
            add(svg, 'rect', { x: 8, y: y, width: 1, height: 1, fill: '#1a1a1a' });
        }
    }
}

drawHorizontal(document.querySelector('.ruler-h'));
drawVertical(document.querySelector('.ruler-v'));
```
